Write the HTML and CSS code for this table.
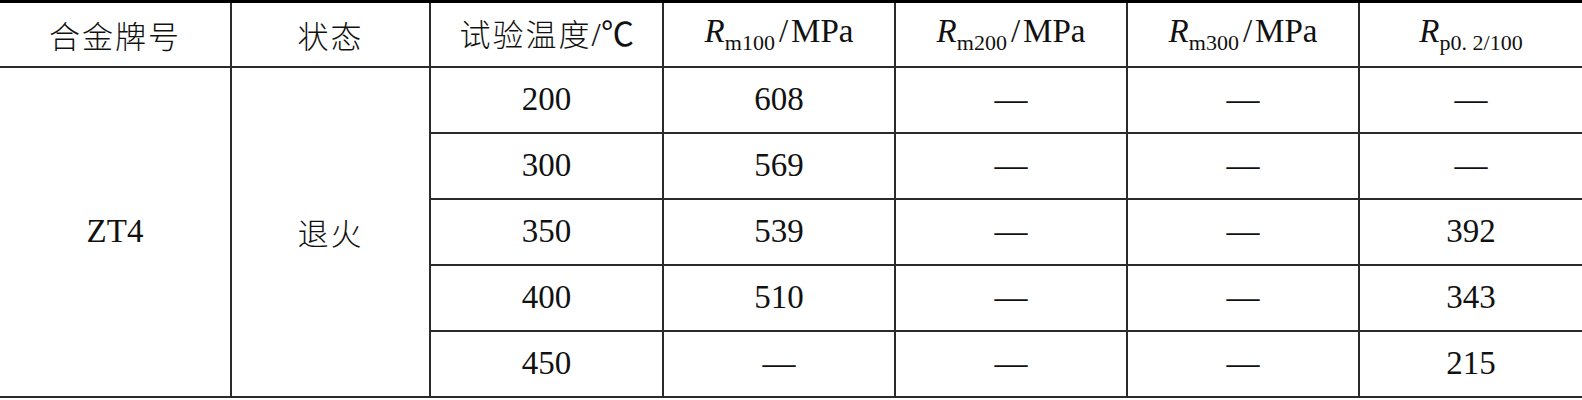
FILE: index.html
```html
<!DOCTYPE html>
<html lang="en">
  <head>
    <meta charset="UTF-8" />
    <meta name="viewport" content="width=device-width, initial-scale=1.0" />
    <title>ZT4 高温持久强度</title>
    <link rel="stylesheet" href="styles.css">
  </head>
  <body>
    <table class="data-table">
      <colgroup>
        <col class="col-alloy" />
        <col class="col-state" />
        <col class="col-temp" />
        <col class="col-val" />
        <col class="col-val" />
        <col class="col-val" />
        <col class="col-last" />
      </colgroup>
      <thead>
        <tr>
          <th class="cjk" lang="zh-CN">合金牌号</th>
          <th class="cjk" lang="zh-CN">状态</th>
          <th class="cjk" lang="zh-CN">试验温度<span class="unit">/℃</span></th>
          <th><i>R</i><sub>m100</sub><span class="slash">/</span>MPa</th>
          <th><i>R</i><sub>m200</sub><span class="slash">/</span>MPa</th>
          <th><i>R</i><sub>m300</sub><span class="slash">/</span>MPa</th>
          <th><i>R</i><sub>p0. 2/100</sub></th>
        </tr>
      </thead>
      <tbody>
        <tr>
          <td rowspan="5" class="num">ZT4</td>
          <td rowspan="5" class="cjk" lang="zh-CN">退火</td>
          <td class="num">200</td>
          <td class="num">608</td>
          <td class="num">—</td>
          <td class="num">—</td>
          <td class="num">—</td>
        </tr>
        <tr>
          <td class="num">300</td>
          <td class="num">569</td>
          <td class="num">—</td>
          <td class="num">—</td>
          <td class="num">—</td>
        </tr>
        <tr>
          <td class="num">350</td>
          <td class="num">539</td>
          <td class="num">—</td>
          <td class="num">—</td>
          <td class="num">392</td>
        </tr>
        <tr>
          <td class="num">400</td>
          <td class="num">510</td>
          <td class="num">—</td>
          <td class="num">—</td>
          <td class="num">343</td>
        </tr>
        <tr>
          <td class="num">450</td>
          <td class="num">—</td>
          <td class="num">—</td>
          <td class="num">—</td>
          <td class="num">215</td>
        </tr>
      </tbody>
    </table>
  </body>
</html>
```

FILE: styles.css
```css
/* Table page */
* {
  margin: 0;
  padding: 0;
  box-sizing: border-box;
}

body {
  background: #fff;
  color: #111;
  font-family: "Liberation Serif", "Times New Roman", serif;
}

.data-table {
  width: 1582px;
  border-collapse: collapse;
  table-layout: fixed;
  border-top: 3px solid #000;
}

.col-alloy { width: 231px; }
.col-state { width: 199px; }
.col-temp { width: 233px; }
.col-val { width: 232px; }
.col-last { width: 223px; }

.data-table th,
.data-table td {
  border: 2px solid #2b2b2b;
  text-align: center;
  vertical-align: middle;
  font-family: "Liberation Serif", "Times New Roman", serif;
  font-size: 33px;
  font-weight: normal;
  height: 66px;
  line-height: 1;
}

.data-table th {
  height: 65px;
  border-top: 3px solid #000;
}

.data-table tr > :first-child {
  border-left: none;
}

.data-table tr > :last-child {
  border-right: none;
}

.data-table tbody tr:first-child > td[rowspan] + td[rowspan] {
  border-right: 2px solid #2b2b2b;
}

.data-table .num {
  font-family: "Liberation Serif", serif;
  font-size: 33px;
}

.data-table .cjk {
  font-family: "Noto Sans CJK SC", sans-serif;
  font-weight: 300;
  font-size: 31px;
  letter-spacing: 2px;
}

.data-table .unit {
  font-family: "Liberation Serif", serif;
  font-size: 33px;
  letter-spacing: 0;
}

.data-table i {
  font-style: italic;
}

.data-table sub {
  font-size: 22px;
  vertical-align: -8px;
}

.slash {
  display: inline-block;
  margin: 0 3px 0 4px;
}
```
